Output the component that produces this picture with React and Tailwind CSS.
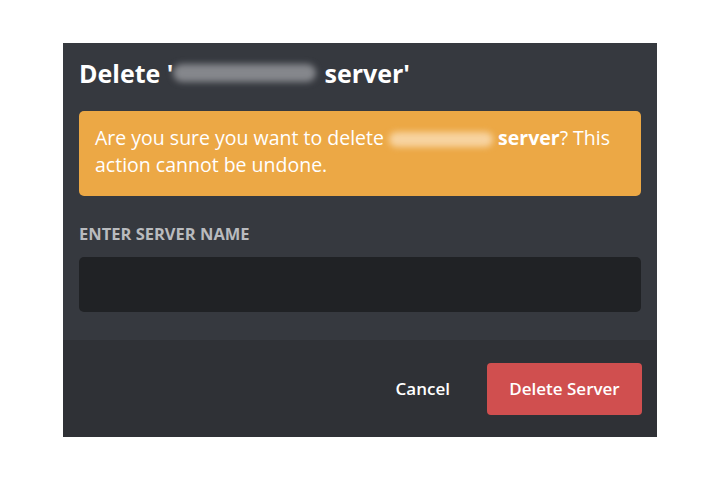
import React from "react";

function Redacted({className}) {
    return <span className={"inline-block align-middle rounded-full blur-[3px] " + className}/>;
}

export default function App() {
    return (
        <div className="w-[720px] h-[480px] bg-white flex items-start justify-center pt-[43px] font-['Open_Sans',sans-serif]">
            <div className="w-[594px] h-[394px] bg-[#36393f] flex flex-col">
                <div className="flex-1 px-4 pt-[13px]">
                    <h1 className="text-[25px] font-bold text-white leading-[34px] flex items-center">
                        <span>Delete '</span>
                        <Redacted className="w-[143px] h-[18px] ml-0 mr-[8px] bg-[#85878c]"/>
                        <span>server'</span>
                    </h1>
                    <div className="mt-[21px] h-[85px] rounded-[5px] bg-[#eca845] px-4 pt-[13px] text-[19.5px] leading-[27px] text-white">
                        Are you sure you want to delete{" "}
                        <Redacted className="w-[104px] h-[15px] bg-[#f7d3a0]"/>{" "}
                        <b>server</b>? This action cannot be undone.
                    </div>
                    <div className="mt-[28px] text-[16.5px] font-bold text-[#b9bbbe] leading-[20px]">
                        ENTER SERVER NAME
                    </div>
                    <div className="mt-[13px] h-[55px] rounded-[5px] bg-[#202225]"/>
                </div>
                <div className="h-[97px] bg-[#2f3136] flex items-center justify-end gap-[37px] pl-4 pr-[15px]">
                    <button className="text-white text-[17px] font-semibold">Cancel</button>
                    <button className="w-[155px] h-[52px] rounded-[4px] bg-[#d04f4f] text-white text-[17px] font-semibold">
                        Delete Server
                    </button>
                </div>
            </div>
        </div>
    );
}
